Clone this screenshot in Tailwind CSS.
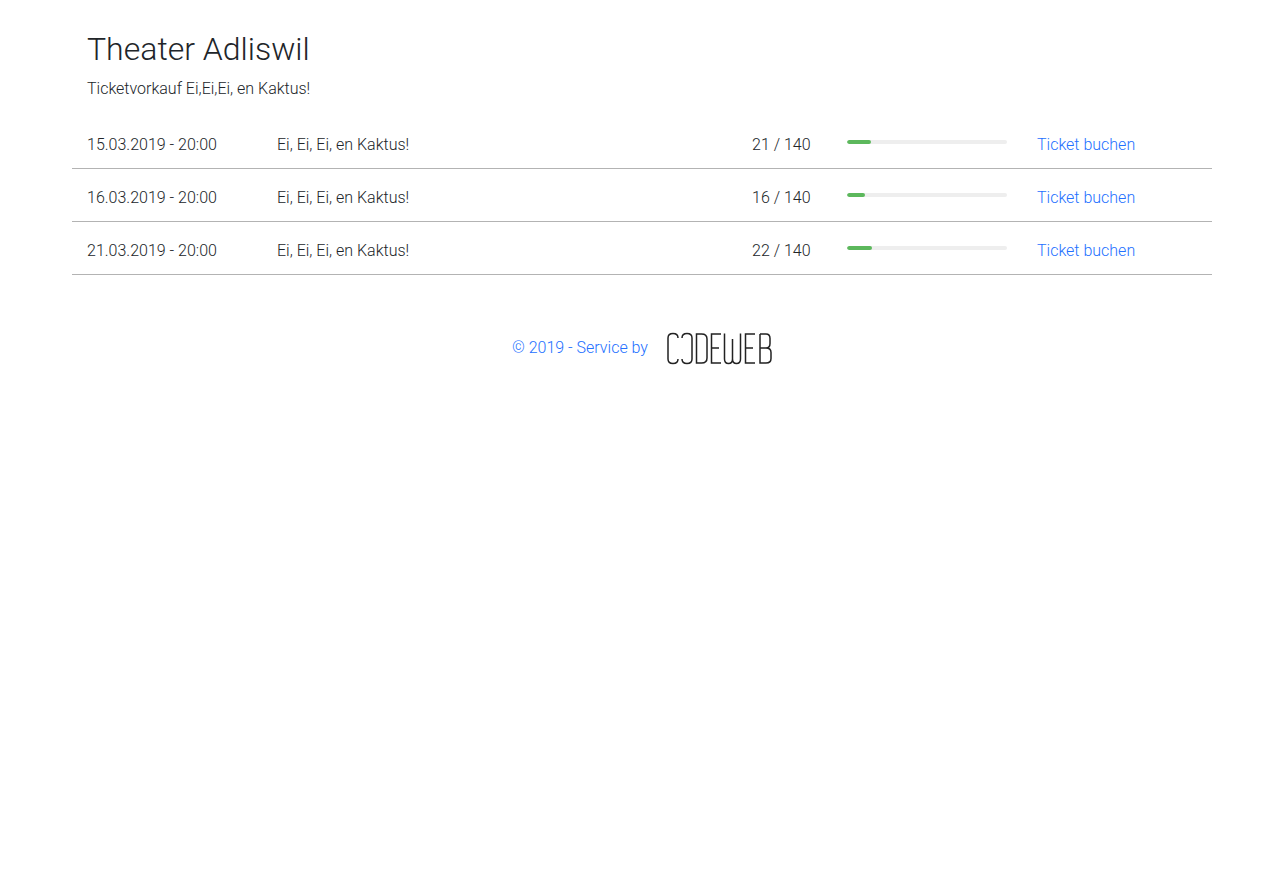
<!DOCTYPE html>
<html lang="de">
<head>
    <meta charset="UTF-8">
    <title>Theater Adliswil</title>
    <script src="https://cdn.jsdelivr.net/npm/@tailwindcss/browser@4"></script>
</head>
<body class="bg-white font-['Roboto',sans-serif] font-light text-[16px] leading-[24px] text-[#212529]">
    <div class="w-[1140px] ml-[72px]">
        <!-- Header -->
        <header class="px-[15px] pt-[30px] h-[116px]">
            <h1 class="text-[32px] leading-[38px] font-light">Theater Adliswil</h1>
            <p class="mt-[9px]">Ticketvorkauf Ei,Ei,Ei, en Kaktus!</p>
        </header>

        <!-- Shows -->
        <div class="grid grid-cols-12 border-b border-[#b3b3b3] pt-[17px] pb-[11px]">
            <div class="col-span-2 px-[15px]">15.03.2019 - 20:00</div>
            <div class="col-span-5 px-[15px]">Ei, Ei, Ei, en Kaktus!</div>
            <div class="col-span-1 px-[15px] whitespace-nowrap">21 / 140</div>
            <div class="col-span-2 px-[15px] pt-[7px]">
                <div class="h-[4px] rounded-full bg-[#eeeeee] overflow-hidden"><div class="h-full rounded-full bg-[#5cb85c]" style="width: 15%"></div></div>
            </div>
            <div class="col-span-2 px-[15px]"><a href="#" class="text-[#2470ff]">Ticket buchen</a></div>
        </div>
        <div class="grid grid-cols-12 border-b border-[#b3b3b3] pt-[17px] pb-[11px]">
            <div class="col-span-2 px-[15px]">16.03.2019 - 20:00</div>
            <div class="col-span-5 px-[15px]">Ei, Ei, Ei, en Kaktus!</div>
            <div class="col-span-1 px-[15px] whitespace-nowrap">16 / 140</div>
            <div class="col-span-2 px-[15px] pt-[7px]">
                <div class="h-[4px] rounded-full bg-[#eeeeee] overflow-hidden"><div class="h-full rounded-full bg-[#5cb85c]" style="width: 11.4%"></div></div>
            </div>
            <div class="col-span-2 px-[15px]"><a href="#" class="text-[#2470ff]">Ticket buchen</a></div>
        </div>
        <div class="grid grid-cols-12 border-b border-[#b3b3b3] pt-[17px] pb-[11px]">
            <div class="col-span-2 px-[15px]">21.03.2019 - 20:00</div>
            <div class="col-span-5 px-[15px]">Ei, Ei, Ei, en Kaktus!</div>
            <div class="col-span-1 px-[15px] whitespace-nowrap">22 / 140</div>
            <div class="col-span-2 px-[15px] pt-[7px]">
                <div class="h-[4px] rounded-full bg-[#eeeeee] overflow-hidden"><div class="h-full rounded-full bg-[#5cb85c]" style="width: 15.7%"></div></div>
            </div>
            <div class="col-span-2 px-[15px]"><a href="#" class="text-[#2470ff]">Ticket buchen</a></div>
        </div>

        <!-- Footer -->
        <footer class="flex justify-center items-center gap-[18px] mt-[56px] pl-[2px]">
            <span class="text-[#2470ff]">© 2019 - Service by</span>
            <svg class="w-[108px] h-[34px] translate-y-[1px]" viewBox="0 0 108 34" fill="none" stroke="#222222" stroke-width="1.5" aria-label="CODEWEB">
                <path d="M12 6Q12 1.500 7 1.500Q2 1.500 2 6V27Q2 31.500 7 31.500Q12 31.500 12 27"/>
                <path d="M16 6Q16 1.500 21 1.500Q26 1.500 26 6V27Q26 31.500 21 31.500Q16 31.500 16 27"/>
                <path d="M30.500 2V31H35.500Q41 31 41 26V7Q41 2 35.500 2Z"/>
                <path d="M55 2H45.500V31H55M45.500 16H53"/>
                <path d="M58.500 1.500V27Q58.500 31.500 62.500 31.500Q66.500 31.500 66.500 27V7M66.500 27Q66.500 31.500 70.500 31.500Q74.500 31.500 74.500 27V1.500"/>
                <path d="M89 2H79.500V31H89M79.500 16H87"/>
                <path d="M94 2V31H100Q105 31 105 26.500V20.500Q105 16 100 16H94M100 16Q104 16 104 11.500V6.500Q104 2 100 2H94"/>
            </svg>
        </footer>
    </div>
</body>
</html>
